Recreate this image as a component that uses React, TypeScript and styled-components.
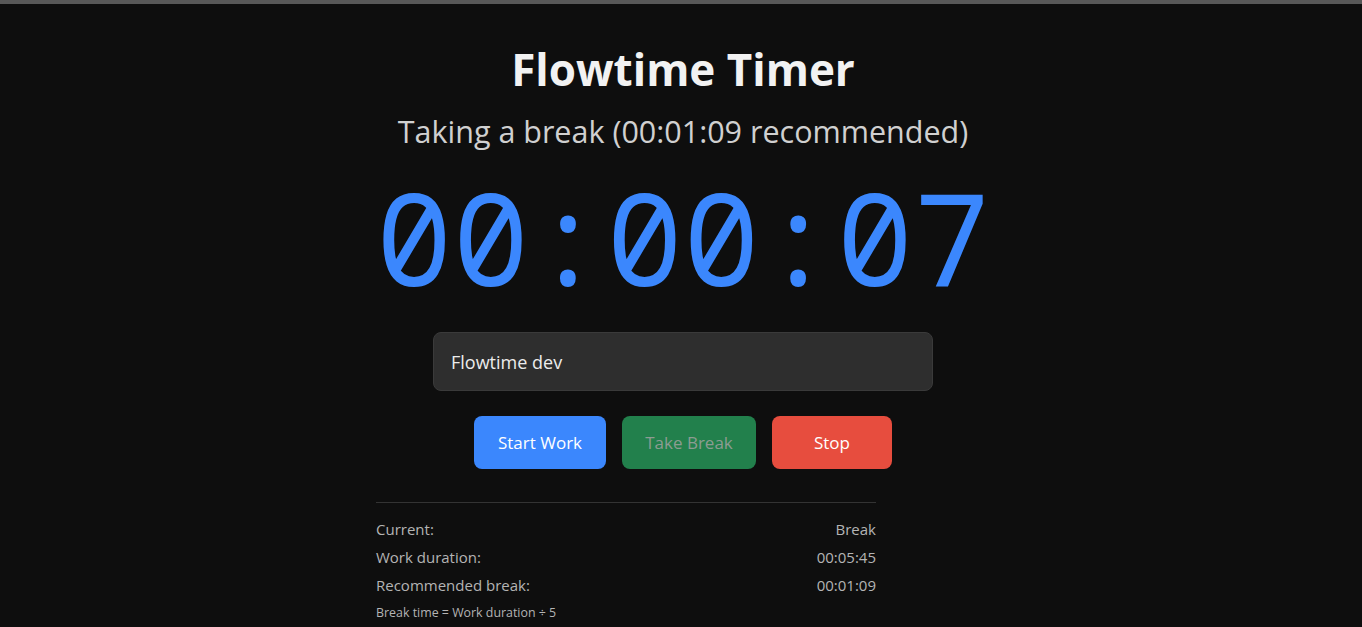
import React from "react";
import styled, { createGlobalStyle } from "styled-components";

const Global = createGlobalStyle`
  html, body { margin: 0; padding: 0; background: #0e0e0e; }
  body { font-family: "Open Sans", "Noto Sans", sans-serif; color: #f0f0f0; }
  * { box-sizing: border-box; }
`;

const TopStrip = styled.div`
  height: 4px;
  background: #585858;
`;

const Page = styled.main`
  display: flex;
  flex-direction: column;
  align-items: center;
  padding-top: 37px;
  padding-left: 4px;
`;

const Title = styled.h1`
  margin: 0;
  font-size: 44px;
  font-weight: 700;
  line-height: 56px;
  color: #f2f2f2;
`;

const Status = styled.p`
  margin: 14px 0 0;
  font-size: 30.5px;
  line-height: 40px;
  color: #d0d0d0;
`;

const Clock = styled.div`
  margin-top: 11px;
  font-family: "Noto Sans Mono", "DejaVu Sans Mono", monospace;
  font-variant-numeric: slashed-zero;
  font-size: 128px;
  line-height: 150px;
  color: #3b87fd;
`;

const TaskInput = styled.input`
  margin-top: 20px;
  width: 500px;
  height: 59px;
  padding: 0 17px;
  background: #2e2e2e;
  border: 1px solid #3a3a3a;
  border-radius: 8px;
  color: #ececec;
  font-family: inherit;
  font-size: 18px;
  outline: none;
`;

const Buttons = styled.div`
  display: flex;
  gap: 16px;
  margin-top: 25px;
`;

const Btn = styled.button<{ $bg: string; $fg?: string; $w: number }>`
  width: ${(p) => p.$w}px;
  height: 53px;
  border: none;
  border-radius: 8px;
  background: ${(p) => p.$bg};
  color: ${(p) => p.$fg ?? "#ffffff"};
  font-family: inherit;
  font-size: 17px;
  cursor: pointer;
`;

const Stats = styled.section`
  width: 614px;
  margin-top: 33px;
  display: flex;
  flex-direction: column;
`;

const StatsInner = styled.div`
  width: 500px;
  border-top: 1px solid #333333;
  padding-top: 12px;
  display: flex;
  flex-direction: column;
`;

const Row = styled.div`
  display: flex;
  justify-content: space-between;
  font-size: 15px;
  line-height: 28px;
  color: #b4b4b4;
`;

const Note = styled.div`
  font-size: 12.4px;
  line-height: 28px;
  color: #b4b4b4;
`;

export default function App() {
  return (
    <>
      <Global />
      <TopStrip />
      <Page>
        <Title>Flowtime Timer</Title>
        <Status>Taking a break (00:01:09 recommended)</Status>
        <Clock>00:00:07</Clock>
        <TaskInput defaultValue="Flowtime dev" />
        <Buttons>
          <Btn $bg="#3b87fd" $w={132}>Start Work</Btn>
          <Btn $bg="#22804c" $fg="#8c9c92" $w={134} disabled>Take Break</Btn>
          <Btn $bg="#e74d3e" $w={120}>Stop</Btn>
        </Buttons>
        <Stats>
          <StatsInner>
            <Row><span>Current:</span><span>Break</span></Row>
            <Row><span>Work duration:</span><span>00:05:45</span></Row>
            <Row><span>Recommended break:</span><span>00:01:09</span></Row>
            <Note>Break time = Work duration ÷ 5</Note>
          </StatsInner>
        </Stats>
      </Page>
    </>
  );
}
